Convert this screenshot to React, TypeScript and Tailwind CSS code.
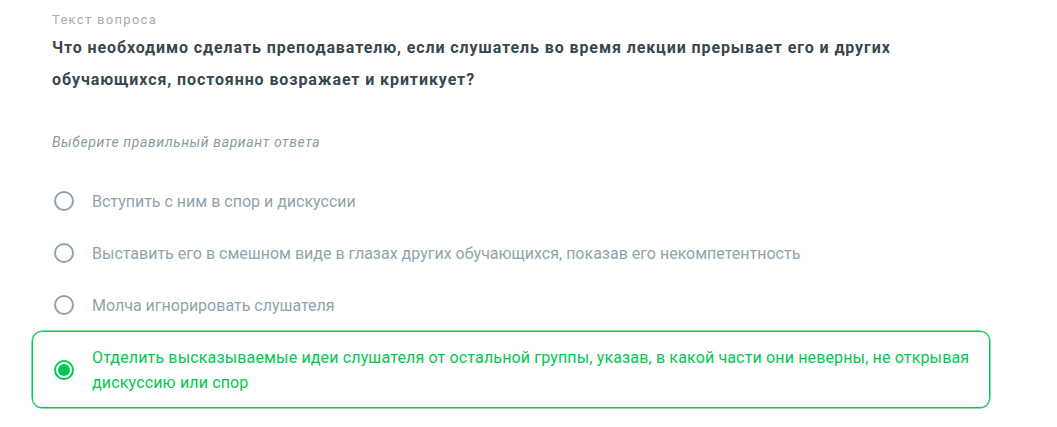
import React from "react";

const options = [
  "Вступить с ним в спор и дискуссии",
  "Выставить его в смешном виде в глазах других обучающихся, показав его некомпетентность",
  "Молча игнорировать слушателя",
  "Отделить высказываемые идеи слушателя от остальной группы, указав, в какой части они неверны, не открывая дискуссию или спор",
];

export default function App() {
  const selected = 3;
  return (
    <div
      className="w-[1057px] h-[427px] bg-white overflow-hidden"
      style={{ fontFamily: "Roboto, 'Noto Sans', sans-serif" }}
    >
      <div className="pl-[52px] pt-[10px]">
        <div className="text-[13px] leading-[20px] tracking-[1.3px] text-[#a3adb3]">Текст вопроса</div>
        <div className="mt-[2px] text-[16px] leading-[32px] font-bold tracking-[0.9px] text-[#37474f] w-[880px]">
          Что необходимо сделать преподавателю, если слушатель во время лекции прерывает его и других обучающихся, постоянно возражает и критикует?
        </div>
        <div className="mt-[36px] text-[14px] leading-[20px] italic tracking-[0.6px] text-[#8d9ba3]">
          Выберите правильный вариант ответа
        </div>
      </div>
      <div className="ml-[32px] w-[958px] mt-[23px] flex flex-col">
        {options.map((o, i) => {
          const sel = i === selected;
          return (
            <div
              key={i}
              className={`flex items-center rounded-[10px] border pl-[21px] pr-[8px] py-[12.5px] ${
                sel ? "border-[#00c853] shadow-[0_0_0_0.5px_#00c853]" : "border-transparent"
              }`}
            >
              {sel ? (
                <div className="w-[20px] h-[20px] shrink-0 rounded-full border-2 border-[#00c853] flex items-center justify-center">
                  <div className="w-[12px] h-[12px] rounded-full bg-[#00c853]" />
                </div>
              ) : (
                <div className="w-[20px] h-[20px] shrink-0 rounded-full border-2 border-[#90a4ae]" />
              )}
              <div
                className={`ml-[18px] text-[16px] leading-[25px] ${
                  sel ? "text-[#00c853] tracking-[0.15px]" : "text-[#90a4ae]"
                }`}
              >
                {o}
              </div>
            </div>
          );
        })}
      </div>
    </div>
  );
}
